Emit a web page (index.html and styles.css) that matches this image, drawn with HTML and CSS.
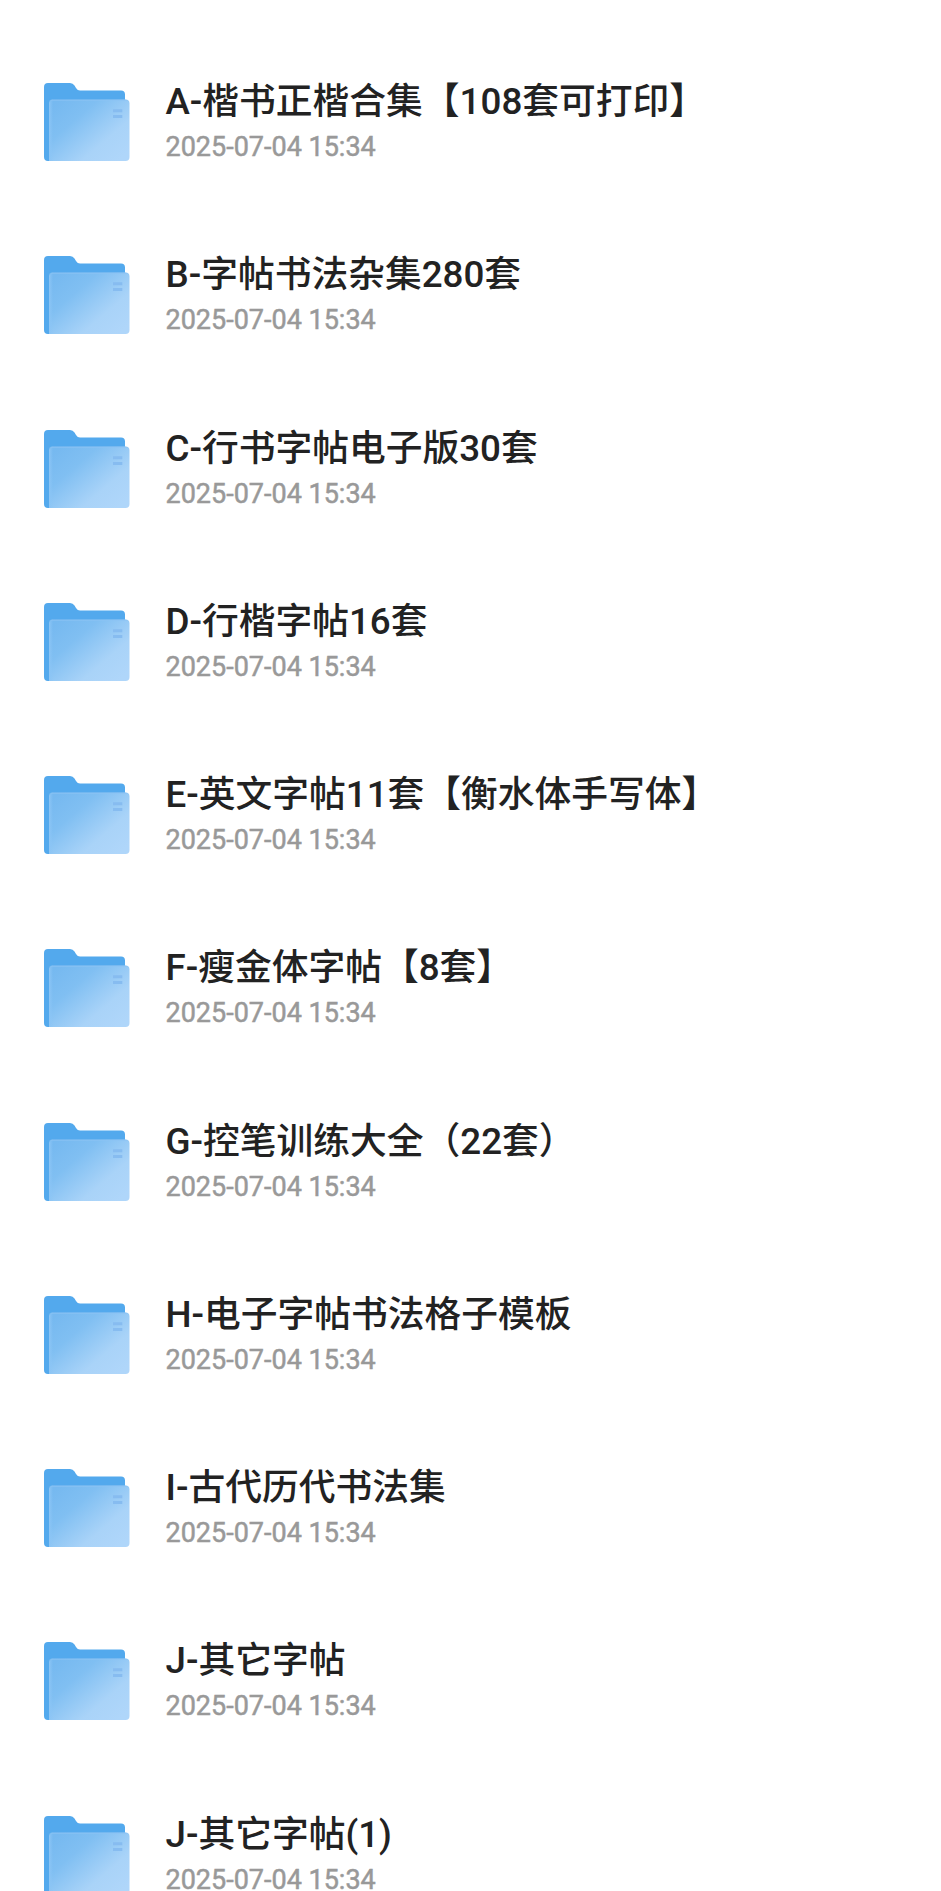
FILE: index.html
```
<!DOCTYPE html>
<html lang="zh-CN">
<head>
<meta charset="utf-8">
<title>字帖</title>
<link rel="stylesheet" href="styles.css">
</head>
<body>
<svg class="defs" width="0" height="0" aria-hidden="true">
  <defs>
    <linearGradient id="front" x1="0" y1="0.15" x2="0.9" y2="0.95">
      <stop offset="0" stop-color="#76b9f0"/>
      <stop offset="0.3" stop-color="#80bff2"/>
      <stop offset="0.72" stop-color="#a9d3f8"/>
      <stop offset="1" stop-color="#afd6fa"/>
    </linearGradient>
    <linearGradient id="edge" x1="0" y1="0" x2="1" y2="0">
      <stop offset="0" stop-color="#8cc5f5"/>
      <stop offset="1" stop-color="#8cc5f5" stop-opacity="0"/>
    </linearGradient>
    <symbol id="folder" viewBox="0 0 86 79">
      <path fill="#53a9ed" d="M4 0H26Q29 0 30.500 2.500L32 5Q33.500 7.500 36 7.500H77Q81 7.500 81 11.500V70H8V78H4Q0 78 0 74V4Q0 0 4 0Z"/>
      <path fill="url(#front)" d="M8 16.500H81.500Q85.500 16.500 85.500 20.500V74Q85.500 78 81.500 78H5V19.500Q5 16.500 8 16.500Z"/>
      <path fill="url(#edge)" d="M5 19.500L8 16.500H9V78H5Z"/>
      <path fill="#8cc3f4" fill-opacity=".6" d="M8 16.500H82L84 18H6Z"/>
      <path fill="#87bcf0" d="M69 26.200H78.300V29.200H69ZM69 32H78.300V35H69Z"/>
    </symbol>
  </defs>
</svg>
<ul class="files">
  <li class="file"><svg class="icon"><use href="#folder"/></svg><div class="info"><div class="name">A-楷书正楷合集【108套可打印】</div><div class="date">2025-07-04 15:34</div></div></li>
  <li class="file"><svg class="icon"><use href="#folder"/></svg><div class="info"><div class="name">B-字帖书法杂集280套</div><div class="date">2025-07-04 15:34</div></div></li>
  <li class="file"><svg class="icon"><use href="#folder"/></svg><div class="info"><div class="name">C-行书字帖电子版30套</div><div class="date">2025-07-04 15:34</div></div></li>
  <li class="file"><svg class="icon"><use href="#folder"/></svg><div class="info"><div class="name">D-行楷字帖16套</div><div class="date">2025-07-04 15:34</div></div></li>
  <li class="file"><svg class="icon"><use href="#folder"/></svg><div class="info"><div class="name">E-英文字帖11套【衡水体手写体】</div><div class="date">2025-07-04 15:34</div></div></li>
  <li class="file"><svg class="icon"><use href="#folder"/></svg><div class="info"><div class="name">F-瘦金体字帖【8套】</div><div class="date">2025-07-04 15:34</div></div></li>
  <li class="file"><svg class="icon"><use href="#folder"/></svg><div class="info"><div class="name">G-控笔训练大全（22套）</div><div class="date">2025-07-04 15:34</div></div></li>
  <li class="file"><svg class="icon"><use href="#folder"/></svg><div class="info"><div class="name">H-电子字帖书法格子模板</div><div class="date">2025-07-04 15:34</div></div></li>
  <li class="file"><svg class="icon"><use href="#folder"/></svg><div class="info"><div class="name">I-古代历代书法集</div><div class="date">2025-07-04 15:34</div></div></li>
  <li class="file"><svg class="icon"><use href="#folder"/></svg><div class="info"><div class="name">J-其它字帖</div><div class="date">2025-07-04 15:34</div></div></li>
  <li class="file"><svg class="icon"><use href="#folder"/></svg><div class="info"><div class="name">J-其它字帖(1)</div><div class="date">2025-07-04 15:34</div></div></li>
</ul>
</body>
</html>
```
FILE: styles.css
```
body {
  margin: 0;
  height: 1891px;
  overflow: hidden;
  background: #fff;
  font-family: Roboto, "Noto Sans CJK SC", sans-serif;
}
.defs { display: block; }
.files {
  margin: 0;
  padding: 35px 0 0 44px;
  list-style: none;
}
.file {
  display: flex;
  gap: 35.5px;
  height: 173.25px;
}
.icon {
  width: 86px;
  height: 79px;
  margin-top: 48px;
  flex: none;
}
.info { padding-top: 41px; }
.name {
  height: 52px;
  line-height: 52px;
  font-size: 36.75px;
  font-weight: 500;
  color: #222;
  white-space: nowrap;
}
.date {
  margin-top: 3px;
  height: 32px;
  line-height: 32px;
  font-size: 27px;
  font-weight: 400;
  -webkit-text-stroke: 0.5px #999;
  color: #999;
  white-space: nowrap;
}
```
